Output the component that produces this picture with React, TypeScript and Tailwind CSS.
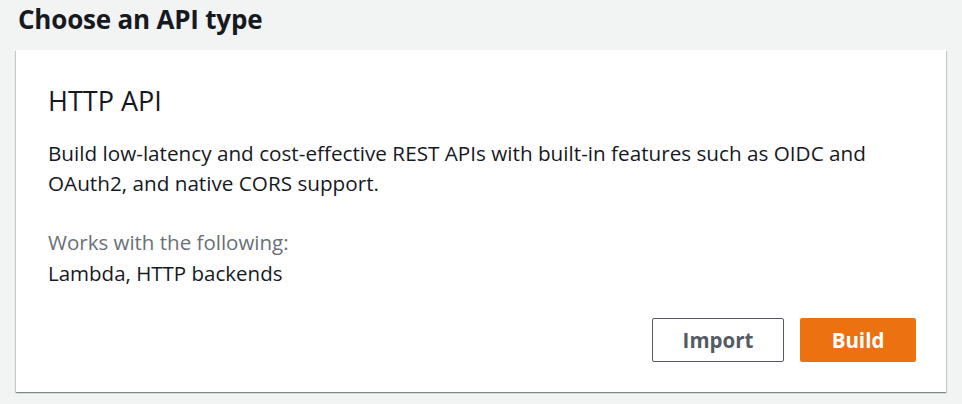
import React from 'react';

export default function App() {
  return (
    <div className="min-h-screen bg-[#f2f3f3] px-4 pt-[3px] pb-3 font-['Open_Sans',sans-serif] text-[#16191f]">
      <h1 className="ml-[2px] text-[26px] font-bold leading-[32px] tracking-[-0.2px]">Choose an API type</h1>

      <section className="mt-[15px] bg-white px-8 pt-[35px] pb-[30px] shadow-[0_1px_1px_0_rgba(0,28,36,0.3),1px_1px_1px_0_rgba(0,28,36,0.15),-1px_1px_1px_0_rgba(0,28,36,0.15)]">
        <h2 className="text-[27px] leading-[32px] font-normal">HTTP API</h2>

        <p className="mt-[21px] text-[20.7px] leading-[30px]">
          Build low-latency and cost-effective REST APIs with built-in features such as OIDC and
          <br />
          OAuth2, and native CORS support.
        </p>

        <div className="mt-[28px] text-[20.5px]">
          <div className="leading-[32px] text-[#687078]">Works with the following:</div>
          <div className="leading-[30px]">Lambda, HTTP backends</div>
        </div>

        <div className="mt-[30px] flex justify-end gap-4">
          <button className="h-[44px] w-[132px] rounded-[2px] border border-[#545b64] bg-white text-[20.5px] font-bold text-[#545b64]">
            Import
          </button>
          <button className="mr-[-2px] h-[44px] w-[116px] rounded-[2px] bg-[#ec7211] text-[20.5px] font-bold text-white">
            Build
          </button>
        </div>
      </section>
    </div>
  );
}
